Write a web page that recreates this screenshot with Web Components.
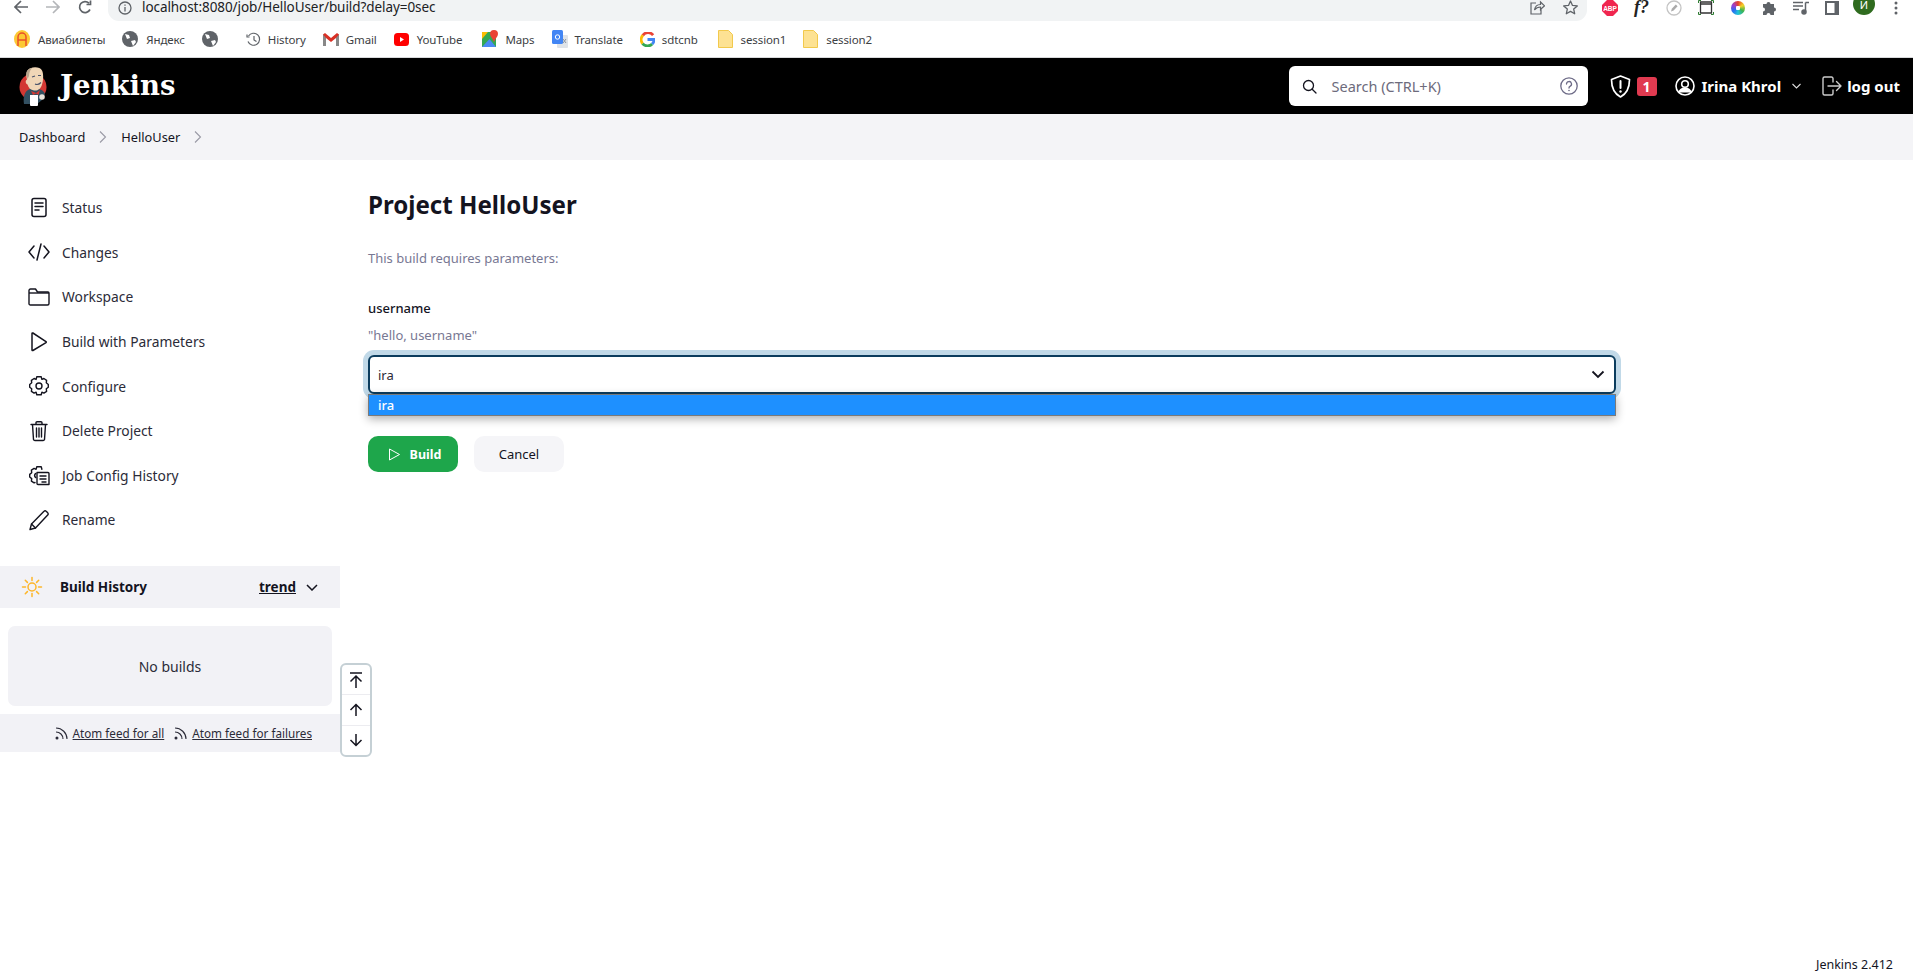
<!DOCTYPE html>
<html lang="en">
<head>
<meta charset="utf-8">
<title>Jenkins</title>
<style>
  html, body { margin: 0; height: 100%; background: #fff; overflow: hidden; }
  body { font-family: "Noto Sans", "Noto Sans CJK SC", sans-serif; color: #14141f; font-size: 14px; }
  svg { display: block; }
</style>
</head>
<body>
<jenkins-page>
  <browser-chrome></browser-chrome>
  <jenkins-header></jenkins-header>
  <bread-crumbs></bread-crumbs>
  <page-body>
    <side-panel slot="side">
      <task-link><svg slot="icon" width="22" height="22" viewBox="0 0 22 22" fill="none" stroke="#14141f" stroke-width="1.5" stroke-linejoin="round" stroke-linecap="round"><rect x="4" y="1.5" width="14" height="18" rx="2"/><path d="M7 6h8M7 9.5h8M7 13h4"/></svg>Status</task-link>
      <task-link><svg slot="icon" width="22" height="22" viewBox="0 0 22 22" fill="none" stroke="#14141f" stroke-width="1.5" stroke-linejoin="round" stroke-linecap="round"><path d="M6 5l-5 6 5 6M16 5l5 6-5 6M13 3L9 19"/></svg>Changes</task-link>
      <task-link><svg slot="icon" width="22" height="22" viewBox="0 0 22 22" fill="none" stroke="#14141f" stroke-width="1.4" stroke-linejoin="round"><path d="M1 6.5V4.5a1.5 1.5 0 0 1 1.5-1.5h5l2 3H20a1 1 0 0 1 1 1v10.500a1.500 1.500 0 0 1-1.500 1.500h-17A1.500 1.500 0 0 1 1 18z"/><path d="M1 7h20"/></svg>Workspace</task-link>
      <task-link><svg slot="icon" width="22" height="22" viewBox="0 0 22 22" fill="none" stroke="#14141f" stroke-width="1.5" stroke-linejoin="round"><path d="M4 2.500v16.500a.6.6 0 0 0 .9.5L18 11.600a.6.6 0 0 0 0-1L4.900 2a.6.6 0 0 0-.9.5z"/></svg>Build with Parameters</task-link>
      <task-link><svg slot="icon" width="22" height="22" viewBox="0 0 22 22" fill="none" stroke="#14141f" stroke-width="1.4" stroke-linejoin="round"><path d="M8.800 1.800h4.400l.7 2.600 2-.9 2.700 1.800-.3 2.500 2 1.700v2.700l-2 1.600.3 2.600-2.700 1.700-2-.9-.7 2.600H8.800l-.7-2.600-2 .9-2.700-1.700.3-2.600-2-1.600V9.500l2-1.700-.3-2.500 2.700-1.800 2 .9z"/><circle cx="11" cy="11" r="3"/></svg>Configure</task-link>
      <task-link><svg slot="icon" width="22" height="22" viewBox="0 0 22 22" fill="none" stroke="#14141f" stroke-width="1.4" stroke-linejoin="round" stroke-linecap="round"><path d="M3 4.500h16M8 4.500V2.800a1 1 0 0 1 1-1h4a1 1 0 0 1 1 1v1.700M4.500 4.500l1 15a1.500 1.500 0 0 0 1.500 1h8a1.500 1.500 0 0 0 1.500-1l1-15M8.500 8v9M11 8v9M13.500 8v9"/></svg>Delete Project</task-link>
      <task-link><svg slot="icon" width="22" height="22" viewBox="0 0 22 22" fill="none" stroke="#14141f" stroke-width="1.4" stroke-linejoin="round" stroke-linecap="round"><path d="M7 18.500l-.9.400-2.700-1.700.3-2.600-2-1.600v-2.600l2-1.700-.3-2.500 2.700-1.800 2 .9.700-2.600h4.400l.7 2.600"/><path d="M9 8.500h11a1 1 0 0 1 1 1v11H10a1 1 0 0 1-1-1zM12 12h6M12 15h6M14 18h4M7.500 9.500a3 3 0 0 0 0 4"/></svg>Job Config History</task-link>
      <task-link><svg slot="icon" width="22" height="22" viewBox="0 0 22 22" fill="none" stroke="#14141f" stroke-width="1.4" stroke-linejoin="round" stroke-linecap="round"><path d="M2 20.500l1.500-5.500L16 2.300a1.500 1.500 0 0 1 2.200 0l1.500 1.500a1.500 1.500 0 0 1 0 2.200L7.500 19z"/><path d="M3.500 15l4 4"/></svg>Rename</task-link>
      <build-history></build-history>
    </side-panel>
    <build-form slot="main"></build-form>
  </page-body>
  <scroll-buttons></scroll-buttons>
  <page-footer>Jenkins 2.412</page-footer>
</jenkins-page>

<script>
class JenkinsPage extends HTMLElement {
  constructor() {
    super();
    this.attachShadow({ mode: 'open' });
    this.shadowRoot.innerHTML = `
      <style>
        :host { display: flex; flex-direction: column; height: 980px; position: relative; }
      </style>
      <slot></slot>
    `;
  }
}

class BrowserChrome extends HTMLElement {
  constructor() {
    super();
    this.attachShadow({ mode: 'open' });
    this.shadowRoot.innerHTML = `
      <style>
        :host { display: block; height: 57px; border-bottom: 1px solid #d8d9db; box-sizing: content-box; font-family: "Noto Sans", "Noto Sans CJK SC", sans-serif; }
        .top { display: flex; align-items: flex-start; height: 24px; padding-left: 14px; }
        .nav { display: flex; gap: 18px; width: 94px; }
        .address { display: flex; align-items: center; flex: none; width: 1479px; height: 21px; box-sizing: border-box; padding: 0 0 6px 10px; background: #f1f3f4; border-radius: 0 0 11px 11px; }
        .url { margin-left: 10px; font-size: 13.500px; line-height: 15px; letter-spacing: -.005em; color: #202124; }
        .url-end { margin-left: auto; display: flex; gap: 18px; padding-right: 9px; }
        .ext { display: flex; align-items: center; height: 15px; gap: 16px; margin-left: 15px; }
        .marks { display: flex; align-items: center; height: 30px; padding-left: 14px; }
        .mark { display: flex; align-items: center; gap: 8px; font-size: 11.500px; color: #3c4043; letter-spacing: -.01em; margin-right: 17px; white-space: nowrap; }
        .fp { font: italic 700 18px "Liberation Serif", serif; color: #222; width: 16px; line-height: 15px; }
        .wheel { width: 14px; height: 14px; border-radius: 50%; margin: 0 1px; background: radial-gradient(circle, #fff 0 2px, transparent 2.500px), conic-gradient(#e8402a, #f5d327, #3fb34f, #1fc4d8, #2a6df0, #9b3fd1, #e8402a); }
        .av { width: 22px; height: 22px; border-radius: 50%; background: #2f6b1f; color: #fff; font-size: 11px; display: flex; align-items: center; justify-content: center; margin-top: -7px; flex: none; }
      </style>
      <div class="top">
        <div class="nav">
          <svg width="14" height="14" viewBox="0 0 14 14" fill="none" stroke="#5f6368" stroke-width="1.700"><path d="M14 7H1.500M7 1L1 7l6 6"/></svg>
          <svg width="14" height="14" viewBox="0 0 14 14" fill="none" stroke="#b4b6b9" stroke-width="1.700"><path d="M0 7h12.500M7 1l6 6-6 6"/></svg>
          <svg width="14" height="14" viewBox="0 0 14 14" fill="none" stroke="#5f6368" stroke-width="1.700"><path d="M12 9.500A5.500 5.500 0 1 1 11 3.200M12.500 .5v4h-4"/></svg>
        </div>
        <div class="address">
          <svg width="14" height="14" viewBox="0 0 14 14" fill="none" stroke="#5f6368" stroke-width="1.300"><circle cx="7" cy="7" r="6"/><path d="M7 6v4.500M7 3.500v1.300"/></svg>
          <span class="url">localhost:8080/job/HelloUser/build?delay=0sec</span>
          <div class="url-end">
            <svg width="15" height="15" viewBox="0 0 15 15" fill="none" stroke="#5f6368" stroke-width="1.200"><path d="M6 3H1v11h10V9M4.500 10c.5-3.500 3-5.500 6-5.500V2l4 3.800-4 3.700V7c-2.500 0-4.500 1-6 3z"/></svg>
            <svg width="15" height="15" viewBox="0 0 15 15" fill="none" stroke="#5f6368" stroke-width="1.300" stroke-linejoin="round"><path d="M7.500 1l2 4.400 4.800.5-3.600 3.200 1 4.700-4.200-2.400-4.200 2.400 1-4.700L.7 5.900l4.800-.5z"/></svg>
          </div>
        </div>
        <div class="ext">
          <svg width="16" height="16" viewBox="0 0 16 16"><path d="M5 0h6l5 5v6l-5 5H5l-5-5V5z" fill="#f0264f"/><text x="8" y="10.500" font-size="6.500" font-weight="700" fill="#fff" text-anchor="middle" font-family="Liberation Sans">ABP</text></svg>
          <span class="fp">f?</span>
          <svg width="16" height="16" viewBox="0 0 16 16" fill="none"><circle cx="8" cy="8" r="7" stroke="#c4c4c4" stroke-width="1.300"/><path d="M5 11.500l.8-2.800 4-4.200 1.800 1.800-4 4.200z" fill="#aaa"/></svg>
          <svg width="16" height="15" viewBox="0 0 16 15" fill="none"><path d="M2.500 2h11v11h-11z" stroke="#333" stroke-width="1.300"/><path d="M2.500 4h11" stroke="#333" stroke-width="1.500"/><path d="M.5 3V.5H3M13 .5h2.500V3M15.500 12v2.500H13M3 14.500H.5V12" stroke="#2f7d32" stroke-width="1"/></svg>
          <span class="wheel"></span>
          <svg width="15" height="15" viewBox="0 0 15 15" fill="#5f6368"><path d="M1 4h3.500a2 2 0 1 1 4 0H12v3.500a2 2 0 1 1 0 4V15H8.500a2 2 0 1 0-4 0H1v-3.500a2 2 0 1 0 0-4z"/></svg>
          <svg width="16" height="14" viewBox="0 0 16 14" fill="none" stroke="#5f6368" stroke-width="1.500"><path d="M0 1.500h10M0 5h10M0 8.500h6M12.500 1.500H16M12.500 1.500v9"/><circle cx="11" cy="11" r="2" fill="#5f6368"/></svg>
          <svg width="14" height="14" viewBox="0 0 14 14"><rect width="14" height="14" fill="#5f6368"/><rect x="2" y="2" width="7.500" height="10" fill="#fff"/></svg>
          <span class="av" style="margin-left:-2px">И</span>
          <svg width="4" height="14" viewBox="0 0 4 14" fill="#5f6368" style="margin-left:3px;flex:none"><circle cx="2" cy="2" r="1.500"/><circle cx="2" cy="7" r="1.500"/><circle cx="2" cy="12" r="1.500"/></svg>
        </div>
      </div>
      <div class="marks">
        <span class="mark"><svg width="16" height="20" viewBox="0 0 16 20"><ellipse cx="8" cy="10" rx="8" ry="9" fill="#fcc934"/><path d="M4 17V8a4 4 0 0 1 8 0v9M4 11h8" fill="none" stroke="#e8502a" stroke-width="1.500"/></svg>Авиабилеты</span>
        <span class="mark"><svg width="16" height="16" viewBox="0 0 16 16"><circle cx="8" cy="8" r="8" fill="#5f6368"/><path d="M3 3l4 1 1 3-3 1zM9 10l4-1 1 2-3 4z" fill="#fff"/></svg>Яндекс</span>
        <span class="mark" style="margin-right:28px"><svg width="16" height="16" viewBox="0 0 16 16"><circle cx="8" cy="8" r="8" fill="#5f6368"/><path d="M3 3l4 1 1 3-3 1zM9 10l4-1 1 2-3 4z" fill="#fff"/></svg></span>
        <span class="mark" style="gap:7px"><svg width="15" height="15" viewBox="0 0 15 15" fill="none" stroke="#5f6368" stroke-width="1.200"><path d="M2.500 4A6 6 0 1 1 2 9.500M1 2.500V5h2.500M8 4v4l2.500 1.500"/></svg>History</span>
        <span class="mark" style="gap:7px"><svg width="16" height="13" viewBox="0 0 16 13"><path d="M0 1.500V13h3V5l5 4 5-4v8h3V1.500L14 0 8 5 2 0z" fill="#d93025"/><path d="M0 1.500V13h3V5zM16 1.500V13h-3V5z" fill="#888"/></svg>Gmail</span>
        <span class="mark" style="margin-right:20px"><svg width="15" height="13" viewBox="0 0 15 13"><rect width="15" height="13" rx="3.500" fill="#f00"/><path d="M6 4l4 2.500L6 9z" fill="#fff"/></svg>YouTube</span>
        <span class="mark" style="gap:7px;margin-right:18px"><svg width="16" height="18" viewBox="0 0 16 18"><path d="M0 2h14v15H0z" fill="#34a853"/><path d="M0 17L7.500 9 14 17z" fill="#4a8af4"/><path d="M0 2h6L0 9z" fill="#fbbc04"/><path d="M12 0a4 4 0 0 1 4 4c0 2.500-3 5-4 8-1-3-4-5.500-4-8a4 4 0 0 1 4-4z" fill="#ea4335"/></svg>Maps</span>
        <span class="mark" style="gap:6px"><svg width="16" height="18" viewBox="0 0 16 18"><rect x="5" y="5" width="11" height="13" rx="1" fill="#dfe3e8"/><rect width="11" height="14" rx="1.500" fill="#4285f4"/><circle cx="5.500" cy="7" r="2.200" fill="none" stroke="#fff" stroke-width="1"/><path d="M11 9l3 4M14 9l-3 4" stroke="#8a93a0"/></svg>Translate</span>
        <span class="mark" style="gap:7px;margin-right:20px"><svg width="15" height="15" viewBox="0 0 16 16" fill="none" stroke-width="3"><path d="M14 3.300A7 7 0 0 0 3 3.500" stroke="#ea4335"/><path d="M3 3.500a7 7 0 0 0-.3 8.800" stroke="#fbbc04"/><path d="M2.700 12.300a7 7 0 0 0 10.300.6" stroke="#34a853"/><path d="M13 12.900A7 7 0 0 0 15 8H8" stroke="#4285f4"/></svg>sdtcnb</span>
        <span class="mark" style="margin-right:17px"><svg width="15" height="18" viewBox="0 0 15 18"><path d="M.5.500h10l4 4v13H.5z" fill="#fde293" stroke="#f2c94c"/></svg>session1</span>
        <span class="mark"><svg width="15" height="18" viewBox="0 0 15 18"><path d="M.5.500h10l4 4v13H.5z" fill="#fde293" stroke="#f2c94c"/></svg>session2</span>
      </div>
    `;
  }
}

class JenkinsHeader extends HTMLElement {
  constructor() {
    super();
    this.attachShadow({ mode: 'open' });
    this.shadowRoot.innerHTML = `
      <style>
        :host { display: flex; align-items: center; height: 56px; background: #000; color: #fff; padding: 0 13px 0 19px; flex: none; }
        .logo { display: flex; align-items: center; gap: 13px; }
        .brand { font: 700 27.500px "DejaVu Serif", serif; line-height: 1; }
        .search { margin-left: auto; display: flex; align-items: center; width: 299px; height: 40px; box-sizing: border-box; background: #fff; border-radius: 6px; padding: 0 10px 0 13px; color: #6d6b7c; font-size: 14.500px; }
        .search span { margin-left: 15px; flex: 1; }
        .shield { display: flex; align-items: center; margin-left: 22px; }
        .badge { margin-left: 6px; width: 20px; height: 19px; border-radius: 3px; background: #e03a50; font-weight: 700; font-size: 14px; display: flex; align-items: center; justify-content: center; }
        .user { display: flex; align-items: center; margin-left: 18px; font-weight: 700; font-size: 15px; }
        .user span { margin: 0 11px 0 7px; }
        .logout { display: flex; align-items: center; margin-left: 21px; font-weight: 700; font-size: 15px; gap: 5px; }
      </style>
      <div class="logo">
        <svg width="28" height="39" viewBox="0 0 28 39">
          <circle cx="14" cy="20" r="13.500" fill="#d33833"/>
          <path d="M5 37c-1-6 0-13 6-15h9c4 1 5 3 6 5l-3 6-5 4z" fill="#335061"/>
          <path d="M8 4c3-5 13-5 15-.5 2 4 1 11 0 14-1 4-4 6.500-8 6-3.500-.5-5.500-2.500-6.500-6-2-.5-2.500-4-.5-5C7 9 7 6 8 4z" fill="#f0d6b7"/>
          <path d="M7.500 6C8 3 10 1 13 1c-2 2-3 5-3 8l-1.500 3C8 10 7.500 8 7.500 6z" fill="#b8a48c"/>
          <path d="M13 10l3-1M19 8.500h3M16 17c2 1 4 .5 6-1.500" stroke="#49536b" stroke-width="1.100" fill="none"/>
          <path d="M12 24l5 2 4-3-1.500 5-2.500-1.500-3 1.500z" fill="#d33833"/>
          <path d="M11 28h8v10a1 1 0 0 1-1 1h-6a1 1 0 0 1-1-1z" fill="#fff"/>
          <circle cx="23" cy="30" r="2.800" fill="#e8e2da"/>
        </svg>
        <span class="brand">Jenkins</span>
      </div>
      <div class="search">
        <svg width="15" height="15" viewBox="0 0 15 15" fill="none" stroke="#14141f" stroke-width="1.300" stroke-linecap="round"><circle cx="6.500" cy="6.500" r="5"/><path d="M10.200 10.200L14 14"/></svg>
        <span>Search (CTRL+K)</span>
        <svg width="18" height="18" viewBox="0 0 18 18" fill="none" stroke="#6d6b87" stroke-width="1.300"><circle cx="9" cy="9" r="8.200"/><path d="M6.500 7a2.500 2.500 0 1 1 3.500 2.300c-.7.300-1 .8-1 1.700" stroke-linecap="round"/><circle cx="9" cy="13.500" r=".8" fill="#6d6b87" stroke="none"/></svg>
      </div>
      <div class="shield">
        <svg width="21" height="23" viewBox="0 0 21 23" fill="none" stroke="#fff" stroke-width="1.700" stroke-linejoin="round"><path d="M10.500 1l9 3.500c0 8-2.500 14-9 17.500-6.500-3.500-9-9.500-9-17.500z"/><path d="M10.500 6v7" stroke-linecap="round" stroke-width="2"/><circle cx="10.500" cy="16.500" r="1.200" fill="#fff" stroke="none"/></svg>
        <span class="badge">1</span>
      </div>
      <div class="user">
        <svg width="20" height="20" viewBox="0 0 20 20" fill="none" stroke="#fff" stroke-width="1.600"><circle cx="10" cy="10" r="9"/><circle cx="10" cy="8" r="3.300"/><path d="M4 16.500c1-3.500 3-4.300 6-4.300s5 .8 6 4.300" fill="#fff"/></svg>
        <span>Irina Khrol</span>
        <svg width="9" height="6" viewBox="0 0 9 6" fill="none" stroke="#ddd" stroke-width="1.100"><path d="M.5 1l4 4 4-4"/></svg>
      </div>
      <div class="logout">
        <svg width="20" height="20" viewBox="0 0 20 20" fill="none" stroke="#ccc" stroke-width="1.400" stroke-linejoin="round" stroke-linecap="round"><path d="M11 6V2.500A1.500 1.500 0 0 0 9.500 1h-7A1.500 1.500 0 0 0 1 2.500v15A1.500 1.500 0 0 0 2.500 19h7a1.500 1.500 0 0 0 1.500-1.500V14"/><path d="M6 10h13M14.500 5.500L19 10l-4.500 4.500"/></svg>
        <span>log out</span>
      </div>
    `;
  }
}

class BreadCrumbs extends HTMLElement {
  constructor() {
    super();
    this.attachShadow({ mode: 'open' });
    const chevron = `<svg width="8" height="12" viewBox="0 0 8 12" fill="none" stroke="#9a9aa5" stroke-width="1.100"><path d="M1 .5L6.500 6 1 11.500"/></svg>`;
    this.shadowRoot.innerHTML = `
      <style>
        :host { display: flex; align-items: center; height: 46px; background: #f4f4f7; padding-left: 19px; font-size: 12.800px; color: #14141f; flex: none; }
        svg { margin: 0 14px; display: block; }
      </style>
      <span>Dashboard</span>${chevron}<span>HelloUser</span>${chevron}
    `;
  }
}

class PageBody extends HTMLElement {
  constructor() {
    super();
    this.attachShadow({ mode: 'open' });
    this.shadowRoot.innerHTML = `
      <style>
        :host { display: grid; grid-template-columns: 340px 1fr; flex: 1; }
      </style>
      <slot name="side"></slot>
      <slot name="main"></slot>
    `;
  }
}

class SidePanel extends HTMLElement {
  constructor() {
    super();
    this.attachShadow({ mode: 'open' });
    this.shadowRoot.innerHTML = `
      <style>
        :host { display: block; padding-top: 25.500px; }
      </style>
      <slot></slot>
    `;
  }
}

class TaskLink extends HTMLElement {
  constructor() {
    super();
    this.attachShadow({ mode: 'open' });
    this.shadowRoot.innerHTML = `
      <style>
        :host { display: flex; align-items: center; gap: 12px; height: 44.600px; padding-left: 28px; font-size: 13.800px; color: #2b2b38; }
      </style>
      <slot name="icon"></slot>
      <slot></slot>
    `;
  }
}

class BuildHistory extends HTMLElement {
  constructor() {
    super();
    this.attachShadow({ mode: 'open' });
    const feed = `<svg width="13" height="13" viewBox="0 0 13 13" fill="none" stroke="#2b2b38" stroke-width="1.100"><path d="M1 1c6 0 11 5 11 11M1 5c4 0 7 3 7 7"/><circle cx="2" cy="11" r="1.500" fill="#2b2b38" stroke="none"/></svg>`;
    let rays = '';
    for (let a = 0; a < 360; a += 45) {
      rays += `<path d="M11 1.500v3" transform="rotate(${a} 11 11)"/>`;
    }
    this.shadowRoot.innerHTML = `
      <style>
        :host { display: block; margin-top: 24px; }
        .head { display: flex; align-items: center; height: 42px; background: #f2f2f6; padding: 0 22px 0 21px; font-weight: 700; font-size: 13.500px; }
        .title { margin-left: 17px; flex: 1; }
        .trend { text-decoration: underline; margin-right: 10px; }
        .card { margin: 18px 8px 8px 8px; height: 80px; background: #f2f2f6; border-radius: 7px; display: flex; align-items: center; justify-content: center; font-size: 14px; color: #2b2b38; }
        .feeds { display: flex; align-items: center; justify-content: flex-end; height: 38px; background: #f2f2f6; padding-right: 28px; font-size: 11.700px; color: #2b2b38; }
        .feeds span { text-decoration: underline; margin-left: 5px; }
        .feeds svg + span + svg { margin-left: 10px; }
      </style>
      <div class="head">
        <svg width="22" height="22" viewBox="0 0 22 22" fill="none" stroke="#fdb62a" stroke-width="1.500" stroke-linecap="round"><circle cx="11" cy="11" r="4"/>${rays}</svg>
        <span class="title">Build History</span>
        <span class="trend">trend</span>
        <svg width="12" height="7" viewBox="0 0 12 7" fill="none" stroke="#14141f" stroke-width="1.500"><path d="M1 1l5 5 5-5"/></svg>
      </div>
      <div class="card">No builds</div>
      <div class="feeds">
        ${feed}<span>Atom feed for all</span>
        ${feed}<span>Atom feed for failures</span>
      </div>
    `;
  }
}

class BuildForm extends HTMLElement {
  constructor() {
    super();
    this.attachShadow({ mode: 'open' });
    this.shadowRoot.innerHTML = `
      <style>
        :host { display: block; padding: 29px 297px 0 28px; }
        h1 { margin: 0; font-size: 24.100px; line-height: 32px; font-weight: 700; color: #14141f; }
        .desc { margin-top: 27px; line-height: 20px; font-size: 13px; color: #787893; }
        .name { margin-top: 30px; line-height: 20px; font-size: 13px; font-weight: 500; color: #14141f; }
        .help { margin-top: 7px; line-height: 20px; font-size: 13px; color: #787893; }
        .buttons { display: flex; gap: 16px; margin-top: 20px; }
        .btn { width: 90px; height: 36px; border-radius: 10px; display: flex; align-items: center; justify-content: center; font-size: 13px; }
        .build { background: #1ea64b; color: #fff; font-weight: 700; font-size: 12.500px; gap: 9px; padding-left: 3px; box-sizing: border-box; }
        .cancel { background: #f5f5f8; color: #14141f; }
      </style>
      <h1>Project HelloUser</h1>
      <div class="desc">This build requires parameters:</div>
      <div class="name">username</div>
      <div class="help">"hello, username"</div>
      <param-select value="ira"></param-select>
      <div class="buttons">
        <div class="btn build">
          <svg width="13" height="13" viewBox="0 0 13 13" fill="none" stroke="#fff" stroke-width="1" stroke-linejoin="round"><path d="M1.500 1v11l10-5.500z"/></svg>
          <span>Build</span>
        </div>
        <div class="btn cancel">Cancel</div>
      </div>
    `;
  }
}

class ParamSelect extends HTMLElement {
  constructor() {
    super();
    this.attachShadow({ mode: 'open' });
  }

  connectedCallback() {
    const value = this.getAttribute('value') || '';
    this.shadowRoot.innerHTML = `
      <style>
        :host { display: block; margin-top: 10px; }
        .box { display: flex; align-items: center; justify-content: space-between; height: 39px; box-sizing: border-box; padding: 0 9px 0 8px; border: 2px solid #0b3c5d; border-radius: 6px; box-shadow: 0 0 0 5px #c1d9e8; font-size: 13px; color: #2b2b38; background: #fff; }
        .list { position: relative; height: 22px; box-sizing: border-box; padding-left: 9px; background: #1e90ff; border: 1px solid #7a7a7a; color: #fff; font-size: 13px; font-weight: 500; line-height: 20px; box-shadow: 0 3px 10px rgba(0,0,0,.32); }
      </style>
      <div class="box">
        <span>${value}</span>
        <svg width="14" height="9" viewBox="0 0 14 9" fill="none" stroke="#14141f" stroke-width="1.800"><path d="M1.500 1.500L7 7l5.500-5.500"/></svg>
      </div>
      <div class="list">${value}</div>
    `;
  }
}

class ScrollButtons extends HTMLElement {
  constructor() {
    super();
    this.attachShadow({ mode: 'open' });
    this.shadowRoot.innerHTML = `
      <style>
        :host { position: absolute; left: 340px; top: 663px; width: 32px; height: 94px; box-sizing: border-box; border: 2px solid #c5d0d5; border-radius: 6px; background: #fff; display: flex; flex-direction: column; }
        div { flex: 1; display: flex; align-items: center; justify-content: center; }
        div + div { border-top: 1px solid #ececf0; }
      </style>
      <div><svg width="14" height="16" viewBox="0 0 14 16" fill="none" stroke="#14141f" stroke-width="1.500"><path d="M1 1h12M7 16V4M1.500 9.500L7 4l5.500 5.500"/></svg></div>
      <div><svg width="14" height="13" viewBox="0 0 14 13" fill="none" stroke="#14141f" stroke-width="1.500"><path d="M7 13V1.500M1.500 7L7 1.500 12.500 7"/></svg></div>
      <div><svg width="14" height="13" viewBox="0 0 14 13" fill="none" stroke="#14141f" stroke-width="1.500"><path d="M7 0v11.500M1.500 6L7 11.500 12.500 6"/></svg></div>
    `;
  }
}

class PageFooter extends HTMLElement {
  constructor() {
    super();
    this.attachShadow({ mode: 'open' });
    this.shadowRoot.innerHTML = `
      <style>
        :host { display: flex; justify-content: flex-end; padding: 0 20px 6px 0; font-size: 12.500px; line-height: 18px; color: #14141f; flex: none; }
      </style>
      <slot></slot>
    `;
  }
}

customElements.define('param-select', ParamSelect);
customElements.define('jenkins-page', JenkinsPage);
customElements.define('browser-chrome', BrowserChrome);
customElements.define('jenkins-header', JenkinsHeader);
customElements.define('bread-crumbs', BreadCrumbs);
customElements.define('page-body', PageBody);
customElements.define('side-panel', SidePanel);
customElements.define('task-link', TaskLink);
customElements.define('build-history', BuildHistory);
customElements.define('build-form', BuildForm);
customElements.define('scroll-buttons', ScrollButtons);
customElements.define('page-footer', PageFooter);
</script>
</body>
</html>
